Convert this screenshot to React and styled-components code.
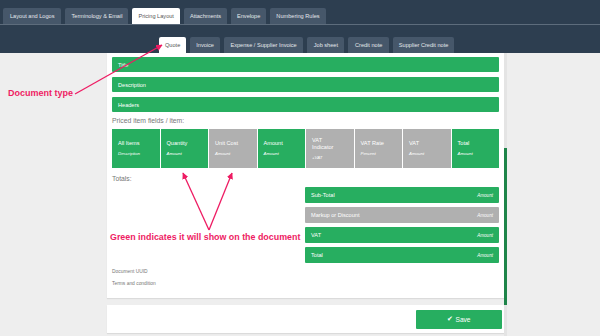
import React from 'react';
import styled, { createGlobalStyle } from 'styled-components';

const Global = createGlobalStyle`
    body {
        margin : 0;
        background : #eeeeee;
        font-family : "Liberation Sans", Arial, sans-serif;
    }
`;

const Page = styled.div`
    position : relative;
    width : 600px;
    height : 336px;
    overflow : hidden;
`;

const Header = styled.div`
    background : #2d3e50;
    height : 53px;
    display : flex;
    flex-direction : column;
`;

const TopTabs = styled.div`
    display : flex;
    gap : 4px;
    padding : 8px 0 0 3px;
    border-bottom : 1px solid #5d6c7c;
`;

const SubTabs = styled.div`
    display : flex;
    gap : 4px;
    padding : 12px 0 0 159px;
`;

const Tab = styled.div`
    height : 16px;
    padding : 0 ${p => p.$pad || 6}px;
    display : flex;
    align-items : center;
    font-size : 5.6px;
    border-radius : 2px 2px 0 0;
    background : ${p => p.$active ? '#ffffff' : '#46576a'};
    color : ${p => p.$active ? '#555' : '#e4e8ec'};
`;

const Body = styled.div`
    display : flex;
    padding-left : 107px;
`;

const Column = styled.div`
    width : 397px;
    display : flex;
    flex-direction : column;
    gap : 7px;
`;

const Panel = styled.div`
    background : #fff;
    height : 245px;
    padding : 4px 5px 0;
    box-sizing : border-box;
    box-shadow : 0 1px 1px rgba(0,0,0,0.08);
    display : flex;
    flex-direction : column;
`;

const Bar = styled.div`
    height : 15px;
    margin-bottom : 5px;
    border-radius : 1px;
    background : ${p => p.$off ? '#b0b0b0' : '#27ae60'};
    color : #fff;
    font-size : 5.6px;
    display : flex;
    align-items : center;
    justify-content : space-between;
    padding : 0 6px;
`;

const Note = styled.em`
    font-size : 4.6px;
`;

const Label = styled.div`
    color : #777;
    font-size : 6.8px;
    margin : 0 0 5px;
`;

const Grid = styled.div`
    display : grid;
    grid-template-columns : repeat(8, 1fr);
    gap : 1px;
    height : 39px;
    margin-bottom : 7px;
`;

const Cell = styled.div`
    background : ${p => p.$off ? '#b0b0b0' : '#27ae60'};
    color : #fff;
    display : flex;
    flex-direction : column;
    justify-content : center;
    padding : 0 6px;
    font-size : 5.6px;
    line-height : 7px;
    em {
        font-size : 4.4px;
        margin-top : 3px;
    }
`;

const Totals = styled.div`
    display : flex;
    flex-direction : column;
    align-self : flex-end;
    width : 194px;
    ${Bar} {
        height : 16px;
        margin-bottom : 4px;
    }
`;

const Small = styled.div`
    color : #777;
    font-size : 4.9px;
    margin-top : ${p => p.$top || 0}px;
`;

const SaveBar = styled.div`
    background : #fff;
    height : 28px;
    display : flex;
    justify-content : flex-end;
    align-items : center;
    padding-right : 2px;
    box-shadow : 0 1px 1px rgba(0,0,0,0.08);
`;

const SaveButton = styled.div`
    width : 86px;
    height : 19px;
    background : #27ae60;
    border-radius : 1px;
    color : #fff;
    font-size : 6.6px;
    display : flex;
    align-items : center;
    justify-content : center;
    gap : 2px;
`;

const Track = styled.div`
    width : 3px;
    background : #e4e4e4;
    height : 283px;
`;

const Thumb = styled.div`
    margin-top : 95px;
    height : 157px;
    width : 3px;
    background : #1e8449;
`;

const Callout = styled.div`
    position : absolute;
    left : ${p => p.$x}px;
    top : ${p => p.$y}px;
    color : #ee1c63;
    font-weight : bold;
    font-size : ${p => p.$size}px;
    white-space : nowrap;
`;

const Arrows = styled.svg`
    position : absolute;
    left : 0;
    top : 0;
    pointer-events : none;
`;

const columns = [
    ['All Items', 'Description'],
    ['Quantity', 'Amount'],
    ['Unit Cost', 'Amount', true],
    ['Amount', 'Amount'],
    ['VAT Indicator', '+VAT', true],
    ['VAT Rate', 'Percent', true],
    ['VAT', 'Amount', true],
    ['Total', 'Amount'],
];

const totals = [
    ['Sub-Total'],
    ['Markup or Discount', true],
    ['VAT'],
    ['Total'],
];

function App() {
    return (
        <Page>
            <Global />
            <Header>
                <TopTabs>
                    <Tab $pad={7}>Layout and Logos</Tab>
                    <Tab $pad={6}>Terminology &amp; Email</Tab>
                    <Tab $active $pad={6}>Pricing Layout</Tab>
                    <Tab $pad={6}>Attachments</Tab>
                    <Tab $pad={6}>Envelope</Tab>
                    <Tab $pad={6}>Numbering Rules</Tab>
                </TopTabs>
                <SubTabs>
                    <Tab $active $pad={6}>Quote</Tab>
                    <Tab $pad={6}>Invoice</Tab>
                    <Tab $pad={6.5}>Expense / Supplier Invoice</Tab>
                    <Tab $pad={6.5}>Job sheet</Tab>
                    <Tab $pad={6.5}>Credit note</Tab>
                    <Tab $pad={6}>Supplier Credit note</Tab>
                </SubTabs>
            </Header>
            <Body>
                <Column>
                    <Panel>
                        <Bar>Title</Bar>
                        <Bar>Description</Bar>
                        <Bar>Headers</Bar>
                        <Label>Priced item fields / item:</Label>
                        <Grid>
                            {columns.map(([name, note, off]) => (
                                <Cell key={name} $off={off}>
                                    <span>{name === 'VAT Indicator' ? <>VAT<br />Indicator</> : name}</span>
                                    <em>{note}</em>
                                </Cell>
                            ))}
                        </Grid>
                        <Label>Totals:</Label>
                        <Totals>
                            {totals.map(([name, off]) => (
                                <Bar key={name} $off={off}>
                                    <span>{name}</span>
                                    <Note>Amount</Note>
                                </Bar>
                            ))}
                        </Totals>
                        <Small $top={2}>Document UUID</Small>
                        <Small $top={7}>Terms and condition</Small>
                    </Panel>
                    <SaveBar>
                        <SaveButton><span>✔</span>Save</SaveButton>
                    </SaveBar>
                </Column>
                <Track><Thumb /></Track>
            </Body>

            <Callout $x={8} $y={88} $size={9}>Document type</Callout>
            <Callout $x={110} $y={232} $size={8.9}>Green indicates it will show on the document</Callout>
            <Arrows width="600" height="336" viewBox="0 0 600 336">
                <defs>
                    <marker id="head" viewBox="0 0 10 10" refX="9" refY="5" markerWidth="5" markerHeight="5" orient="auto">
                        <path d="M0 0 L10 5 L0 10 z" fill="#ee1c63" />
                    </marker>
                </defs>
                <g stroke="#ee1c63" strokeWidth="1.3" fill="none">
                    <line x1="75" y1="94" x2="162" y2="45" markerEnd="url(#head)" />
                    <line x1="209" y1="230" x2="183" y2="173" markerEnd="url(#head)" />
                    <line x1="209" y1="230" x2="232" y2="173" markerEnd="url(#head)" />
                </g>
            </Arrows>
        </Page>
    );
}

export default App;
